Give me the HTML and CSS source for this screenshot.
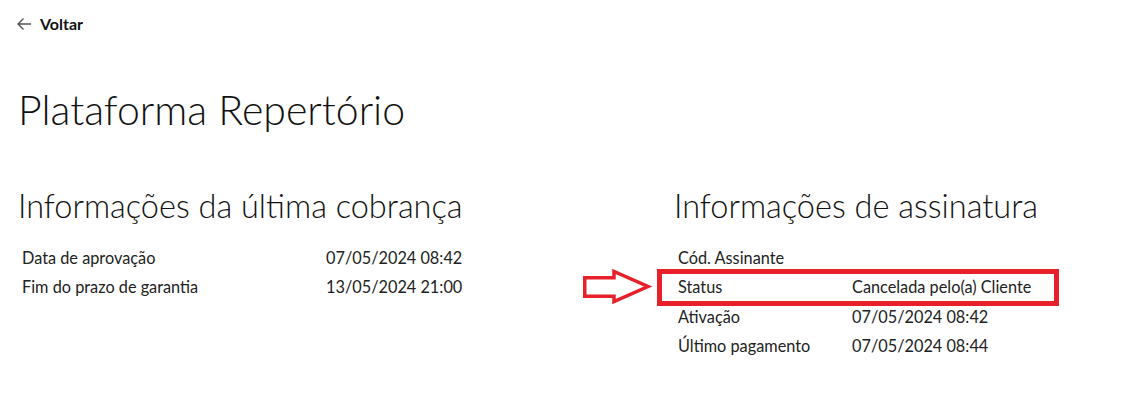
FILE: index.html
```html
<!DOCTYPE html>
<html>
<head>
  <title>Plataforma Repertório</title>
  <link rel="stylesheet" href="styles.css">
</head>
<body>
  <div class="page">
    <a class="back-link" href="#">
      <svg width="16" height="14" viewBox="0 0 16 14" fill="none" stroke="#555" stroke-width="1.4">
        <path d="M15 7H2M7.5 1.5L2 7l5.5 5.5"/>
      </svg>
      <span>Voltar</span>
    </a>

    <h1 class="title">Plataforma Repertório</h1>

    <div class="columns">
      <section class="info-block">
        <h2>Informações da última cobrança</h2>
        <table class="info-table charge">
          <tr><td>Data de aprovação</td><td>07/05/2024 08:42</td></tr>
          <tr><td>Fim do prazo de garantia</td><td>13/05/2024 21:00</td></tr>
        </table>
      </section>

      <section class="info-block">
        <h2>Informações de assinatura</h2>
        <table class="info-table subscription">
          <tr><td>Cód. Assinante</td><td></td></tr>
          <tr class="highlight">
            <td>
              <span class="mark-box"></span>
              <svg class="mark-arrow" width="74" height="36" viewBox="0 0 74 36" fill="#fff" stroke="#e8202a" stroke-width="3.5">
                <path d="M2.75 8.75H32V2.5L66 17.5L32 32.5V27.25H2.75Z"/>
              </svg>
              Status
            </td>
            <td>Cancelada pelo(a) Cliente</td>
          </tr>
          <tr><td>Ativação</td><td>07/05/2024 08:42</td></tr>
          <tr><td>Último pagamento</td><td>07/05/2024 08:44</td></tr>
        </table>
      </section>
    </div>
  </div>
</body>
</html>
```

FILE: styles.css
```css
body {
  margin: 0;
  background: #fff;
  color: #111;
  font-family: Lato, 'Noto Sans', sans-serif;
}

.page {
  padding: 14px 18px;
}

.back-link {
  display: inline-flex;
  align-items: center;
  gap: 8px;
  margin-left: -2px;
  color: #111;
  text-decoration: none;
  font-size: 16px;
  font-weight: bold;
}

.title {
  margin: 52px 0 0;
  font-size: 41px;
  font-weight: 300;
  line-height: 48px;
}

.columns {
  display: grid;
  grid-template-columns: 656px 1fr;
  margin-top: 52px;
}

.info-block h2 {
  margin: 0 0 17px;
  font-size: 32.5px;
  font-weight: 300;
  line-height: 40px;
}

.info-table {
  border-collapse: collapse;
  font-size: 16.3px;
  color: #222;
}

.info-table td {
  padding: 4px 4px;
  line-height: 21.5px;
  vertical-align: middle;
}

.charge td:first-child {
  width: 296px;
}

.subscription td:first-child {
  width: 166px;
}

.highlight td:first-child {
  position: relative;
}

.mark-box {
  position: absolute;
  left: -17px;
  top: -3px;
  width: 392px;
  height: 27px;
  border: 5px solid #e8202a;
}

.mark-arrow {
  position: absolute;
  left: -92px;
  top: -3px;
}
```
